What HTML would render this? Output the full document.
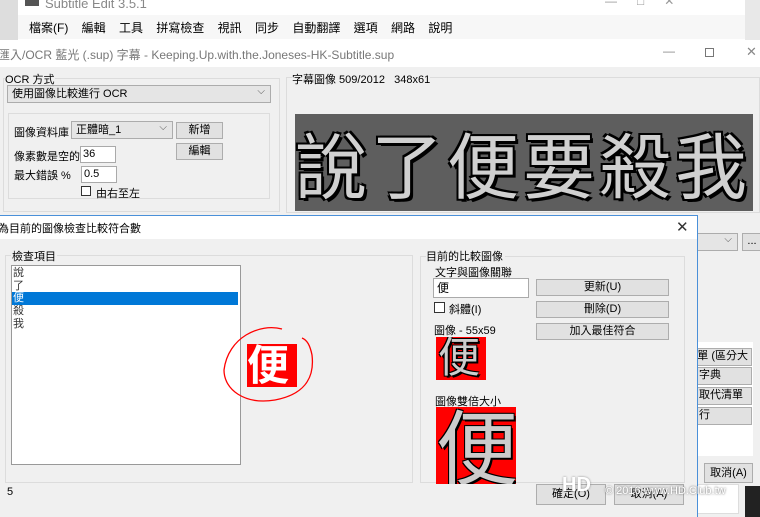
<!DOCTYPE html>
<html><head><meta charset="utf-8"><style>
*{box-sizing:border-box;margin:0;padding:0}
body{width:760px;height:517px;overflow:hidden;position:relative;background:#f0f0f0;font-family:"Liberation Sans","Noto Sans CJK TC",sans-serif;font-size:11px;color:#000}
.a{position:absolute}
.btn{position:absolute;background:#e1e1e1;border:1px solid #adadad;text-align:center;font-size:11px;line-height:15px}
.grp{position:absolute;border:1px solid #dcdcdc}
.lbl{position:absolute;font-size:11px;white-space:nowrap}
.combo{position:absolute;background:#e5e5e5;border:1px solid #acacac;font-size:11px;padding-left:4px;line-height:16px}
.combo::after{content:"⌵";position:absolute;right:5px;top:-2px;color:#555;font-size:10px}
.red{position:absolute;background:#f00;overflow:hidden;color:#ccc;font-family:"Noto Sans CJK TC",sans-serif;text-shadow:2px 2px 0 #000,-1px -1px 0 #000,1px -1px 0 #000,-1px 1px 0 #000}
</style></head><body>
<div class="a" style="left:0;top:0;width:760px;height:40px;background:#fff"></div>
<div class="a" style="left:0;top:0;width:18px;height:40px;background:#ddd"></div>
<div class="a" style="left:745px;top:0;width:15px;height:40px;background:#e8e8e8"></div>
<div class="a" style="left:25px;top:0;width:14px;height:6px;background:#555"></div>
<div class="lbl" style="left:45px;top:-4px;font-size:13px;color:#888">Subtitle Edit 3.5.1</div>
<div class="lbl" style="left:605px;top:-6px;color:#999;font-size:12px">—&nbsp;&nbsp;&nbsp;&nbsp;&nbsp;&nbsp;□&nbsp;&nbsp;&nbsp;&nbsp;&nbsp;&nbsp;✕</div>
<div class="a" style="left:18px;top:15px;width:727px;height:24px;background:#f7f7f7"></div>
<div class="lbl" style="left:29px;top:19px;font-size:12px;word-spacing:10px">檔案(F) 編輯 工具 拼寫檢查 視訊 同步 自動翻譯 選項 網路 說明</div>
<div class="a" style="left:0;top:40px;width:760px;height:27px;background:#fff"></div>
<div class="lbl" style="left:-2px;top:46px;font-size:12px;color:#777">匯入/OCR 藍光 (.sup) 字幕 - Keeping.Up.with.the.Joneses-HK-Subtitle.sup</div>
<div class="lbl" style="left:663px;top:44px;color:#888;font-size:12px">—</div>
<div class="a" style="left:705px;top:48px;width:9px;height:9px;border:1px solid #777"></div>
<div class="lbl" style="left:746px;top:44px;color:#888;font-size:13px">✕</div>
<div class="grp" style="left:3px;top:78px;width:277px;height:134px"></div>
<div class="lbl" style="left:5px;top:71px;background:#f0f0f0">OCR 方式</div>
<div class="combo" style="left:7px;top:85px;width:264px;height:18px">使用圖像比較進行 OCR</div>
<div class="grp" style="left:8px;top:113px;width:262px;height:86px"></div>
<div class="lbl" style="left:14px;top:124px">圖像資料庫</div>
<div class="combo" style="left:71px;top:121px;width:102px;height:18px">正體暗_1</div>
<div class="btn" style="left:176px;top:122px;width:47px;height:17px">新增</div>
<div class="btn" style="left:176px;top:143px;width:47px;height:17px">編輯</div>
<div class="lbl" style="left:14px;top:148px">像素數是空的</div>
<div class="a" style="left:80px;top:146px;width:36px;height:17px;background:#fff;border:1px solid #aaa;padding-left:2px;line-height:15px">36</div>
<div class="lbl" style="left:14px;top:167px">最大錯誤 %</div>
<div class="a" style="left:81px;top:166px;width:36px;height:17px;background:#fff;border:1px solid #aaa;padding-left:2px;line-height:15px">0.5</div>
<div class="a" style="left:81px;top:186px;width:10px;height:10px;background:#fff;border:1px solid #333"></div>
<div class="lbl" style="left:96px;top:185px">由右至左</div>
<div class="grp" style="left:286px;top:77px;width:474px;height:136px"></div>
<div class="lbl" style="left:292px;top:71px;background:#f0f0f0">字幕圖像 509/2012&nbsp;&nbsp;&nbsp;348x61</div>
<div class="a" style="left:295px;top:114px;width:458px;height:97px;background:#5e5e5e;color:#d0d0d0;font-family:'Noto Sans CJK TC',sans-serif;font-size:72px;line-height:95px;letter-spacing:4px;white-space:nowrap;text-shadow:3px 3px 0 #000,-2px -2px 0 #000,2px -2px 0 #000,-2px 2px 0 #000;overflow:hidden">說了便要殺我</div>
<div class="combo" style="left:690px;top:233px;width:48px;height:18px"></div>
<div class="btn" style="left:742px;top:233px;width:20px;height:18px">...</div>
<div class="a" style="left:697px;top:342px;width:56px;height:114px;background:#fff"></div>
<div class="btn" style="left:690px;top:348px;width:62px;height:18px;text-align:right;padding-right:3px">單 (區分大</div>
<div class="btn" style="left:690px;top:367px;width:62px;height:18px;text-align:left;padding-left:8px">字典</div>
<div class="btn" style="left:690px;top:387px;width:62px;height:18px;text-align:left;padding-left:8px">取代清單</div>
<div class="btn" style="left:690px;top:407px;width:62px;height:18px;text-align:left;padding-left:8px">行</div>
<div class="btn" style="left:704px;top:463px;width:49px;height:20px;line-height:18px">取消(A)</div>
<div class="a" style="left:697px;top:484px;width:42px;height:30px;background:#fff;border:1px solid #ddd"></div>
<div class="a" style="left:745px;top:486px;width:15px;height:31px;background:#222"></div>
<div class="a" style="left:0;top:215px;width:698px;height:302px;background:#f0f0f0;border-top:1px solid #4a90d9;border-right:1px solid #4a90d9"></div>
<div class="a" style="left:0;top:216px;width:697px;height:23px;background:#fff"></div>
<div class="lbl" style="left:-2px;top:220px;font-size:11px">為目前的圖像檢查比較符合數</div>
<div class="lbl" style="left:676px;top:218px;font-size:15px;color:#333">✕</div>
<div class="grp" style="left:5px;top:255px;width:408px;height:228px"></div>
<div class="lbl" style="left:11px;top:248px;background:#f0f0f0;padding:0 1px">檢查項目</div>
<div class="a" style="left:11px;top:265px;width:230px;height:200px;background:#fff;border:1px solid #999"></div>
<div class="lbl" style="left:13px;top:267px;line-height:12.7px;color:#333">說<br>了<br><span style="display:block;width:226px;background:#0078d7;color:#fff;margin-left:-1px;padding-left:1px">便</span>殺<br>我</div>
<svg class="a" style="left:220px;top:325px" width="100" height="85"><path d="M62 4 C40 -2 8 12 4 45 C4 65 25 80 55 75 C82 70 95 55 92 30 C90 20 87 15 82 13" fill="none" stroke="#f00" stroke-width="1.3"/></svg>
<div class="red" style="left:247px;top:344px;width:50px;height:43px;color:#fff;font-size:42px;line-height:38px;text-shadow:none;font-weight:bold">便</div>
<div class="grp" style="left:420px;top:256px;width:265px;height:227px"></div>
<div class="lbl" style="left:426px;top:248px;background:#f0f0f0;padding-right:2px">目前的比較圖像</div>
<div class="lbl" style="left:435px;top:264px">文字與圖像關聯</div>
<div class="a" style="left:433px;top:278px;width:96px;height:20px;background:#fff;border:1px solid #aaa;padding-left:3px;line-height:18px;font-size:12px">便</div>
<div class="btn" style="left:536px;top:279px;width:133px;height:17px">更新(U)</div>
<div class="btn" style="left:536px;top:301px;width:133px;height:17px">刪除(D)</div>
<div class="btn" style="left:536px;top:323px;width:133px;height:17px">加入最佳符合</div>
<div class="a" style="left:434px;top:302px;width:11px;height:11px;background:#fff;border:1px solid #333"></div>
<div class="lbl" style="left:449px;top:301px">斜體(I)</div>
<div class="lbl" style="left:434px;top:322px">圖像 - 55x59</div>
<div class="red" style="left:436px;top:337px;width:50px;height:43px;font-size:42px;line-height:36px;padding-left:2px">便</div>
<div class="lbl" style="left:435px;top:393px">圖像雙倍大小</div>
<div class="red" style="left:436px;top:407px;width:80px;height:77px;font-size:82px;line-height:72px;padding-left:0">便</div>
<div class="lbl" style="left:7px;top:486px">5</div>
<div class="btn" style="left:536px;top:484px;width:70px;height:21px;line-height:19px">確定(O)</div>
<div class="btn" style="left:614px;top:484px;width:70px;height:21px;line-height:19px">取消(A)</div>
<div class="lbl" style="left:562px;top:474px;color:#fff;font-size:20px;font-weight:bold;text-shadow:0 0 2px #888">HD</div>
<div class="lbl" style="left:605px;top:485px;color:#fff;font-size:11px;text-shadow:0 0 2px #555">© 2016 www.HD.Club.tw</div>
</body></html>
